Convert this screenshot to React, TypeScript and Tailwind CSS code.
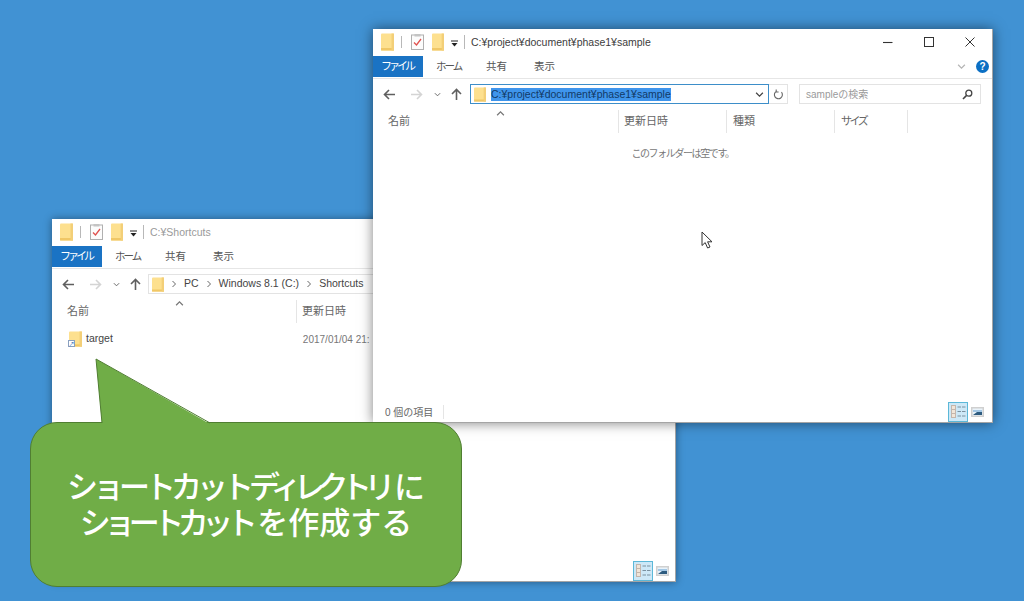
import React from "react";

const FONT = "font-['Liberation_Sans','Noto_Sans_CJK_JP',sans-serif]";

function Folder({ w = 13, h = 18 }: { w?: number; h?: number }) {
  return (
    <svg width={w} height={h} viewBox="0 0 13 18" preserveAspectRatio="none" className="shrink-0">
      <rect x="0" y="0.5" width="13" height="17" rx="1" fill="#fde08f" />
      <rect x="0" y="15" width="13" height="2.5" fill="#f0c766" />
      <rect x="10.5" y="0.5" width="2.5" height="17" fill="#f3cf78" />
    </svg>
  );
}

function Clip() {
  return (
    <svg width="13" height="16" viewBox="0 0 13 16" className="shrink-0">
      <rect x="0.5" y="1" width="12" height="14.5" fill="#fcfcfc" stroke="#b0b0b0" />
      <rect x="3.5" y="0" width="6" height="2.5" fill="#c4c4c4" />
      <path d="M3 8.5 L5.5 11 L10 5" fill="none" stroke="#e0524f" strokeWidth="1.3" />
    </svg>
  );
}

function QuickBar({ title, muted }: { title: string; muted?: boolean }) {
  return (
    <div className="flex h-[26px] items-center pl-[8px]">
      <Folder />
      <div className="ml-[7px] h-[12px] w-px bg-[#b8b8b8]" />
      <div className="ml-[9px]"><Clip /></div>
      <div className="ml-[8px]"><Folder w={12} /></div>
      <svg width="7" height="7" viewBox="0 0 7 7" className="ml-[7px] mt-[2px]">
        <rect x="0" y="0.5" width="7" height="1" fill="#222" />
        <path d="M0.5 3 H6.5 L3.5 6.5 Z" fill="#222" />
      </svg>
      <div className="ml-[6px] h-[14px] w-px bg-[#b8b8b8]" />
      <span className={`ml-[6px] text-[10.5px] leading-none ${muted ? "text-[#9a9a9a]" : "text-[#3c3c3c]"}`}>{title}</span>
    </div>
  );
}

function Tabs({ right }: { right?: React.ReactNode }) {
  return (
    <div className="flex h-[24px] items-stretch border-b border-[#e6e6e6] pt-px pb-px">
      <div className="flex w-[50px] items-center justify-center bg-[#1a73c4] pr-[2px] text-[11px] tracking-[-3px] text-white">ファイル</div>
      <span className="ml-[13px] mt-px w-[50px] self-center text-[10.5px] tracking-[-2px] text-[#555]">ホーム</span>
      <span className="mt-px w-[48px] self-center text-[10.5px] text-[#555]">共有</span>
      <span className="mt-px self-center text-[10.5px] text-[#555]">表示</span>
      {right}
    </div>
  );
}

function Arrow({ dir, color, className }: { dir: "l" | "r" | "u"; color: string; className?: string }) {
  const d = dir === "l" ? "M12 6.5 H1.5 M6 2 L1.5 6.5 L6 11" : dir === "r" ? "M1 6.5 H11.5 M7 2 L11.5 6.5 L7 11" : "M6.5 12 V1.5 M2 6 L6.5 1.5 L11 6";
  return (
    <svg width="13" height="13" viewBox="0 0 13 13" className={className}>
      <path d={d} fill="none" stroke={color} strokeWidth="1.6" />
    </svg>
  );
}

function Chevron({ up, size = 7, color = "#666", className }: { up?: boolean; size?: number; color?: string; className?: string }) {
  return (
    <svg width={size} height={size} viewBox="0 0 8 8" className={className}>
      <path d={up ? "M1 5.5 L4 2.5 L7 5.5" : "M1 2.5 L4 5.5 L7 2.5"} fill="none" stroke={color} strokeWidth="1.1" />
    </svg>
  );
}

function Crumb() {
  return (
    <svg width="4" height="8" viewBox="0 0 4 8" className="shrink-0">
      <path d="M0.5 1 L3.5 4 L0.5 7" fill="none" stroke="#666" strokeWidth="1" />
    </svg>
  );
}

function NavButtons() {
  return (
    <div className="flex items-center pl-[10px]">
      <Arrow dir="l" color="#5f5f5f" />
      <Arrow dir="r" color="#d4d4d4" className="ml-[14px]" />
      <Chevron className="ml-[11px]" />
      <Arrow dir="u" color="#5f5f5f" className="ml-[9px]" />
    </div>
  );
}

function Col({ label, w, sep = true, pl = 5, tight }: { label: string; w: string; sep?: boolean; pl?: number; tight?: boolean }) {
  return (
    <div className={`flex h-[23px] shrink-0 items-center text-[11px] text-[#666] ${tight ? "tracking-[-2.5px]" : ""} ${w} ${sep ? "border-r border-[#e5e5e5]" : ""}`} style={{ paddingLeft: pl }}>
      {label}
    </div>
  );
}

function ViewIcons() {
  return (
    <div className="flex items-center">
      <div className="flex h-[20px] w-[20px] items-center justify-center border border-[#5cb8d8] bg-[#cde8f7]">
        <svg width="15" height="13" viewBox="0 0 15 13">
          <rect x="0.5" y="0.5" width="4" height="12" fill="#f1e5d8" stroke="#c4b6ac" />
          <path d="M0.5 4.5H4.5M0.5 8.5H4.5" stroke="#c4b6ac" />
          <path d="M6.5 2H10M11 2H14.5M6.5 6.5H10M11 6.5H14.5M6.5 11H10M11 11H14.5" stroke="#7b919f" />
        </svg>
      </div>
      <svg width="13" height="10" viewBox="0 0 13 10" className="ml-[3px]">
        <rect x="0" y="0" width="13" height="10" fill="#d0d0d0" />
        <rect x="1.5" y="1.5" width="10" height="7" fill="#eaf3fa" />
        <path d="M2 4H11" stroke="#5b9bd0" />
        <path d="M2 8 L6 5 H11 V8 Z" fill="#2d5b7f" />
      </svg>
    </div>
  );
}

function Front() {
  return (
    <div className="absolute left-[373px] top-[29px] flex h-[394px] w-[620px] flex-col border-b border-r border-[#a5a5a5] bg-white shadow-[0_0_12px_rgba(0,0,0,0.5)]">
      <div className="relative">
        <QuickBar title="C:¥project¥document¥phase1¥sample" />
        <div className="absolute right-[17px] top-[8px] flex items-center gap-[31px]">
          <svg width="10" height="10" viewBox="0 0 10 10"><path d="M0 5.5H9.5" stroke="#333" strokeWidth="1.1" /></svg>
          <svg width="10" height="10" viewBox="0 0 10 10"><rect x="0.5" y="0.5" width="9" height="9" fill="none" stroke="#333" /></svg>
          <svg width="10" height="10" viewBox="0 0 10 10"><path d="M0.5 0.5L9.5 9.5M9.5 0.5L0.5 9.5" stroke="#333" strokeWidth="1" /></svg>
        </div>
      </div>
      <Tabs
        right={
          <div className="ml-auto flex items-center gap-[10px] pr-[3px]">
            <Chevron size={9} color="#b5b5b5" />
            <div className="flex h-[13px] w-[13px] items-center justify-center rounded-full bg-[#0b6fc4] text-[10px] font-bold leading-none text-white">?</div>
          </div>
        }
      />
      <div className="flex h-[30px] items-center">
        <NavButtons />
        <div className="ml-[7px] flex h-[20px] w-[299px] items-center border border-[#3d8ec9] pl-[3px] pr-[4px]">
          <Folder w={12} h={15} />
          <span className="ml-[5px] bg-[#3f95ec] text-[10.5px] leading-[13px] text-[#123a66]">C:¥project¥document¥phase1¥sample</span>
          <Chevron size={9} color="#444" className="ml-auto" />
        </div>
        <div className="flex h-[20px] w-[19px] items-center justify-center border-y border-r border-[#e3e3e3]">
          <svg width="11" height="11" viewBox="0 0 11 11"><path d="M8.5 3.2A4 4 0 1 1 3.5 2.2M3.2 0.5V3H5.6" fill="none" stroke="#666" strokeWidth="1.1" /></svg>
        </div>
        <div className="ml-[11px] flex h-[20px] w-[182px] items-center border border-[#e3e3e3] pl-[6px] pr-[7px] text-[10px] text-[#9a9a9a]">
          <span>sampleの検索</span>
          <svg width="11" height="11" viewBox="0 0 11 11" className="ml-auto"><circle cx="6.8" cy="4.2" r="3" fill="none" stroke="#444" strokeWidth="1.3" /><path d="M4.6 6.4L1 10" stroke="#444" strokeWidth="1.6" /></svg>
        </div>
      </div>
      <div className="relative mt-px flex">
        <Col label="名前" w="w-[246px]" pl={15} />
        <Col label="更新日時" w="w-[108px]" />
        <Col label="種類" w="w-[108px]" pl={6} />
        <Col label="サイズ" w="w-[73px]" pl={6} tight />
        <Chevron up size={9} color="#777" className="absolute left-[123px] top-[-1px]" />
      </div>
      <div className="mt-[14px] text-center text-[10px] leading-[14px] tracking-[-1.4px] text-[#777]">このフォルダーは空です。</div>
      <div className="mt-auto flex h-[21px] items-center pl-[12px] pr-[8px]">
        <span className="pt-[2px] text-[10px] text-[#666]">0 個の項目</span>
        <div className="ml-[10px] h-[14px] w-px bg-[#e5e5e5]" />
        <div className="ml-auto"><ViewIcons /></div>
      </div>
    </div>
  );
}

function Back() {
  return (
    <div className="absolute left-[52px] top-[219px] flex h-[363px] w-[624px] flex-col border-b border-r border-[#a5a5a5] bg-white shadow-[0_0_8px_rgba(0,0,0,0.4)]">
      <QuickBar title="C:¥Shortcuts" muted />
      <Tabs />
      <div className="flex h-[30px] items-center">
        <NavButtons />
        <div className="ml-[6px] flex h-[20px] flex-1 items-center gap-[8px] border border-[#e3e3e3] pl-[3px] text-[10.5px] text-[#444]">
          <Folder w={12} h={15} />
          <Crumb />
          <span>PC</span>
          <Crumb />
          <span>Windows 8.1 (C:)</span>
          <Crumb />
          <span>Shortcuts</span>
        </div>
      </div>
      <div className="relative mt-px flex">
        <Col label="名前" w="w-[245px]" pl={15} />
        <Col label="更新日時" w="w-[108px]" />
        <Chevron up size={9} color="#777" className="absolute left-[123px] top-[-1px]" />
      </div>
      <div className="mt-[6px] flex h-[20px] items-center pl-[17px]">
        <div className="relative h-[16px] w-[13px]">
          <Folder w={13} h={16} />
          <div className="absolute bottom-0 left-[-1px] flex h-[7px] w-[7px] items-center justify-center border border-[#8aa0c0] bg-white text-[6px] leading-none text-[#1c5fb0]">↗</div>
        </div>
        <span className="ml-[4px] text-[10.5px] text-[#444]">target</span>
        <span className="ml-[190px] whitespace-nowrap text-[10px] text-[#777]">2017/01/04 21:</span>
      </div>
      <div className="mt-auto flex h-[21px] items-center justify-end pr-[6px]">
        <ViewIcons />
      </div>
    </div>
  );
}

export default function App() {
  return (
    <div className={`relative h-[601px] w-[1024px] overflow-hidden bg-[#4192d3] ${FONT}`}>
      <Back />
      <Front />
      <div className="absolute left-[30px] top-[422px] flex h-[165px] w-[432px] flex-col items-center justify-center rounded-[27px] border border-[#507e32] bg-[#70ad47] pt-[2px] text-[31px] font-medium leading-[36px] text-white">
        <div className="whitespace-nowrap">
          <span className="tracking-[-5px]">ショートカット</span>
          <span className="tracking-[-7.5px]">ディレクトリ</span>
          <span className="ml-[6px]">に</span>
        </div>
        <div className="whitespace-nowrap">
          <span className="tracking-[-6.5px]">ショートカット</span>
          <span className="ml-[6px]">を作成する</span>
        </div>
      </div>
      <svg width="120" height="67" viewBox="0 0 120 67" className="absolute left-[95px] top-[358px]">
        <path d="M1 1 L7 66 L115 66 Z" fill="#70ad47" />
        <path d="M7 65 L1 1 L115 65" fill="none" stroke="#507e32" strokeWidth="1" />
      </svg>
      <svg width="14" height="20" viewBox="0 0 14 20" className="absolute left-[701px] top-[231px]">
        <path d="M1 1 V14.5 L4.2 11.6 L6.6 17 L9 16 L6.6 10.8 H11 Z" fill="#fff" stroke="#333" strokeWidth="1" />
      </svg>
    </div>
  );
}
